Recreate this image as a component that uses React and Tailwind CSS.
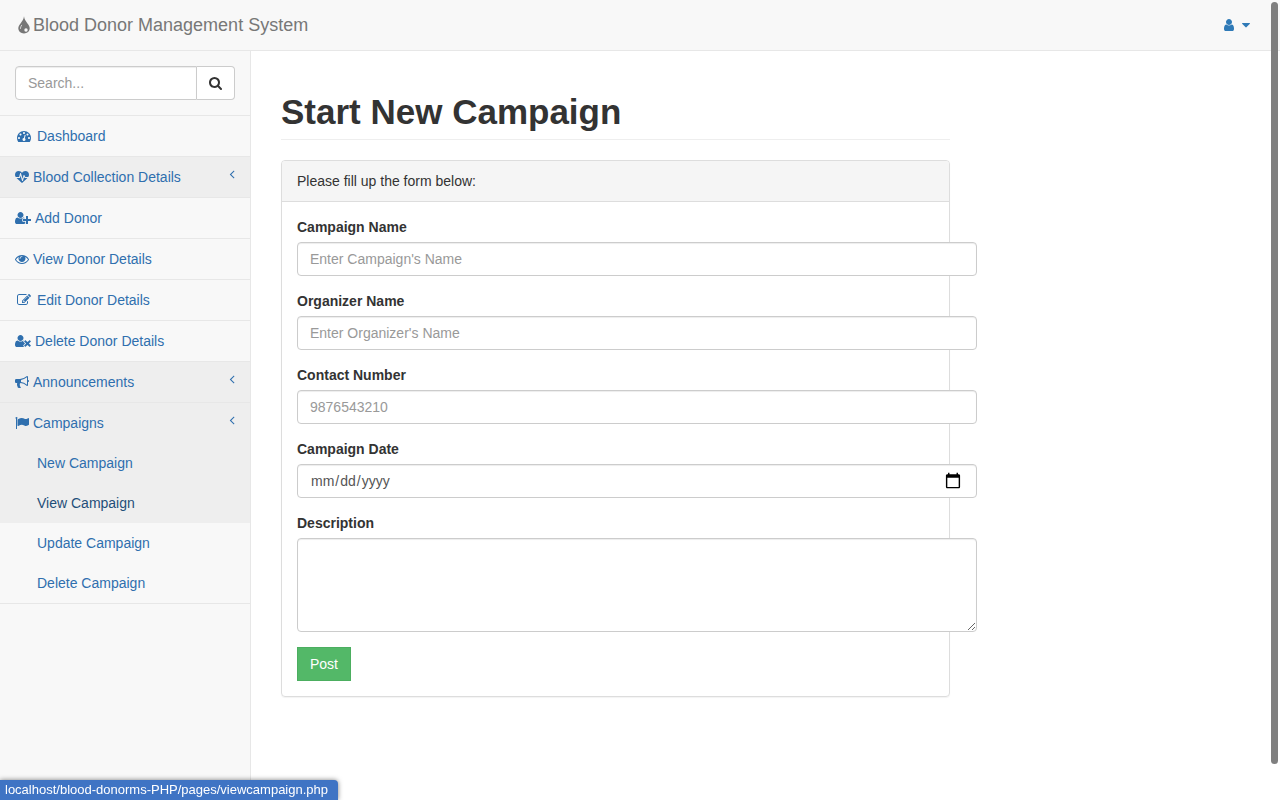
const HEAD_PATH =
  'M704 640q-159 0-271.5 112.5t-112.5 271.5 112.5 271.5 271.5 112.5 271.5-112.5 112.5-271.5-112.5-271.5-271.5-112.5z'

const icons = {
  user: {
    w: 1280,
    x: 256,
    d: 'M1536 1399q0 109-62.5 187t-150.5 78h-854q-88 0-150.5-78t-62.5-187q0-85 8.5-160.5t31.5-152 58.5-131 94-89 134.5-34.5q131 128 313 128t313-128q76 0 134.5 34.5t94 89 58.5 131 31.5 152 8.5 160.5zm-256-887q0 159-112.5 271.5t-271.5 112.5-271.5-112.5-112.5-271.5 112.5-271.5 271.5-112.5 271.5 112.5 112.5 271.5z',
  },
  caret: {
    w: 1024,
    x: 384,
    d: 'M1408 704q0 26-19 45l-448 448q-19 19-45 19t-45-19l-448-448q-19-19-19-45t19-45 45-19h896q26 0 45 19t19 45z',
  },
  search: {
    w: 1664,
    x: 64,
    d: 'M1216 832q0-185-131.5-316.5t-316.5-131.5-316.5 131.5-131.5 316.5 131.5 316.5 316.5 131.5 316.5-131.5 131.5-316.5zm512 832q0 52-38 90t-90 38q-54 0-90-38l-343-342q-179 124-399 124-143 0-273.5-55.5t-225-150-150-225-55.5-273.5 55.5-273.5 150-225 225-150 273.5-55.5 273.5 55.5 225 150 150 225 55.5 273.5q0 220-124 399l343 343q37 37 37 90z',
  },
  dashboard: {
    w: 1792,
    d: 'M384 1152q0-53-37.5-90.5t-90.5-37.5-90.5 37.5-37.5 90.5 37.5 90.5 90.5 37.5 90.5-37.5 37.5-90.5zm192-448q0-53-37.5-90.5t-90.5-37.5-90.5 37.5-37.5 90.5 37.5 90.5 90.5 37.5 90.5-37.5 37.5-90.5zm428 481l101-382q6-26-7.5-48.5t-38.5-29.5-48 6.5-30 39.5l-101 382q-60 5-107 43.5t-63 98.5q-20 77 20 146t117 89 146-20 89-117q16-60-6-117t-72-91zm660-33q0-53-37.5-90.5t-90.5-37.5-90.5 37.5-37.5 90.5 37.5 90.5 90.5 37.5 90.5-37.5 37.5-90.5zm-640-640q0-53-37.5-90.5t-90.5-37.5-90.5 37.5-37.5 90.5 37.5 90.5 90.5 37.5 90.5-37.5 37.5-90.5zm448 192q0-53-37.5-90.5t-90.5-37.5-90.5 37.5-37.5 90.5 37.5 90.5 90.5 37.5 90.5-37.5 37.5-90.5zm320 448q0 261-141 483-19 29-54 29h-1402q-35 0-54-29-141-221-141-483 0-182 71-348t191-286 286-191 348-71 348 71 286 191 191 286 71 348z',
  },
  heartbeat: {
    w: 1792,
    d: 'M1280 1024h305q-5 6-10 10.5t-9 7.5l-3 4-623 600q-18 18-44 18t-44-18l-624-602q-5-2-21-20h369q22 0 39.5-13.5t22.5-34.5l70-281 190 667q6 20 23 33t39 13q21 0 38-13t23-33l146-485 56 112q18 35 57 35zm512-428q0 145-103 300h-369l-111-221q-8-17-25.5-27t-36.5-8q-45 5-56 46l-129 430-196-686q-6-20-23.5-33t-39.5-13-39 13.5-22 34.5l-116 464h-423q-103-155-103-300 0-220 127-344t351-124q62 0 126.5 21.5t120 58 95.5 68.5 76 68q36-36 76-68t95.5-68.5 120-58 126.5-21.5q224 0 351 124t127 344z',
  },
  userPlus: {
    w: 2048,
    flip: true,
    d: HEAD_PATH + 'M1664 512h352q13 0 22.5-9.5t9.5-22.5v-192q0-13-9.5-22.5t-22.5-9.5h-352v-352q0-13-9.5-22.5t-22.5-9.5h-192q-13 0-22.5 9.5t-9.5 22.5v352h-352q-13 0-22.5 9.5t-9.5 22.5v192q0 13 9.5 22.5t22.5 9.5h352v352q0 13 9.5 22.5t22.5 9.5h192q13 0 22.5-9.5t9.5-22.5v-352zM928 288q0-52 38-90t90-38h256v-238q-68-50-171-50h-874q-121 0-194 69t-73 190q0 53 3.5 103.5t14 109t26.5 108.5t43 97.5t62 81t85.5 53.5t111.5 20q19 0 39-17q79-61 154.5-91.5t164.5-30.5t164.5 30.5t154.5 91.5q20 17 39 17q132 0 217-96h-223q-52 0-90-38t-38-90v-192z',
  },
  userTimes: {
    w: 2048,
    flip: true,
    d: HEAD_PATH + 'M1781 320l249-249q9-9 9-23q0-13-9-22l-136-136q-9-9-22-9q-14 0-23 9l-249 249l-249-249q-9-9-23-9q-13 0-22 9l-136 136q-9 9-9 22q0 14 9 23l249 249l-249 249q-9 9-9 23q0 13 9 22l136 136q9 9 22 9q14 0 23-9l249-249l249 249q9 9 23 9q13 0 22-9l136-136q9-9 9-22q0-14-9-23zM1283 320l-181-181q-37-37-37-91q0-53 37-90l83-83q-21-3-44-3h-874q-121 0-194 69t-73 190q0 53 3.5 103.5t14 109t26.5 108.5t43 97.5t62 81t85.5 53.5t111.5 20q19 0 39-17q154-122 319-122t319 122q20 17 39 17q28 0 57-6q-28-27-41-50t-13-56q0-54 37-91z',
  },
  eye: {
    w: 1792,
    d: 'M1664 960q-152-236-381-353 61 104 61 225 0 185-131.5 316.5t-316.5 131.5-316.5-131.5-131.5-316.5q0-121 61-225-229 117-381 353 133 205 333.5 326.5t434.5 121.5 434.5-121.5 333.5-326.5zm-720-384q0-20-14-34t-34-14q-125 0-214.5 89.5t-89.5 214.5q0 20 14 34t34 14 34-14 14-34q0-86 61-147t147-61q20 0 34-14t14-34zm848 384q0 34-20 69-140 230-376.5 368.5t-499.5 138.5-499.5-139-376.5-368q-20-35-20-69t20-69q140-229 376.5-368t499.5-139 499.5 139 376.5 368q20 35 20 69z',
  },
  edit: {
    w: 1792,
    d: 'M888 1184l116-116-152-152-116 116v56h96v96h56zm440-720q-16-16-33 1l-350 350q-17 17-1 33t33-1l350-350q17-17 1-33zm80 594v190q0 119-84.5 203.5t-203.5 84.5h-832q-119 0-203.5-84.5t-84.5-203.5v-832q0-119 84.5-203.5t203.5-84.5h832q63 0 117 25 15 7 18 23 3 17-9 29l-49 49q-14 14-32 8-23-6-45-6h-832q-66 0-113 47t-47 113v832q0 66 47 113t113 47h832q66 0 113-47t47-113v-126q0-13 9-22l64-64q15-15 35-7t20 29zm-96-738l288 288-672 672h-288v-288zm444 132l-92 92-288-288 92-92q28-28 68-28t68 28l152 152q28 28 28 68t-28 68z',
  },
  bullhorn: {
    w: 1792,
    d: 'M1664 640q53 0 90.5 37.5t37.5 90.5-37.5 90.5-90.5 37.5v384q0 52-38 90t-90 38q-417-347-812-380-58 19-91 66t-31 100.5 40 92.5q-20 33-23 65.5t6 58 33.5 55 48 50 61.5 50.5q-29 58-111.5 83t-168.5 11.5-132-55.5q-7-23-29.5-87.5t-32-94.5-23-89-15-101 3.5-98.5 22-110.5h-122q-66 0-113-47t-47-113v-192q0-66 47-113t113-47h480q435 0 896-384 52 0 90 38t38 90v384zm-128 604v-954q-394 302-768 343v270q377 42 768 341z',
  },
  flag: {
    w: 1792,
    flip: true,
    d: 'M320 1280q0-72-64-110v-1266q0-13-9.5-22.5t-22.5-9.5h-64q-13 0-22.5 9.5t-9.5 22.5v1266q-64 38-64 110q0 53 37.5 90.5t90.5 37.5t90.5-37.5t37.5-90.5zM1792 1216v-763q0-25-12.5-38.5t-39.5-27.5q-215-116-369-116q-61 0-123.5 22t-108.5 48t-115.5 48t-142.5 22q-192 0-464-146q-17-9-33-9q-26 0-45 19t-19 45v742q0 32 31 55q21 14 79 43q236 120 421 120q107 0 200-29t219-88q38-19 88-19q54 0 117.5 21t110 47t88 47t54.5 21q26 0 45-19t19-45z',
  },
  angleLeft: {
    w: 768,
    x: 512,
    d: 'M1203 544q0 13-10 23l-393 393 393 393q10 10 10 23t-10 23l-50 50q-10 10-23 10t-23-10l-466-466q-10-10-10-23t10-23l466-466q10-10 23-10t23 10l50 50q10 10 10 23z',
  },
}

function Icon({ name, className = '' }) {
  const { w, x = 0, d, flip } = icons[name]
  return (
    <svg
      viewBox={`${x} 0 ${w} 1792`}
      className={`h-[14px] shrink-0 ${className}`}
      fill="currentColor"
      aria-hidden="true"
    >
      <path d={d} transform={flip ? 'translate(0 1536) scale(1 -1)' : undefined} />
    </svg>
  )
}

function DropLogo() {
  return (
    <svg viewBox="0 0 12 18" className="h-[18px] w-3 shrink-0" aria-hidden="true">
      <path
        d="M6 .3C6.3 3 7.7 5 9.3 7.2 10.7 9.1 11.7 10.5 11.7 12.2 11.7 15.3 9.2 17.4 6 17.4S.3 15.3.3 12.2C.3 10.5 1.3 9.1 2.7 7.2 4.3 5 5.7 3 6 .3z"
        fill="#777"
      />
      <circle cx="8" cy="14" r="1.7" fill="#f8f8f8" />
      <path d="M3.6 9.2Q2.4 10.9 2.4 12.5" fill="none" stroke="#d4d4d4" strokeWidth="1" strokeLinecap="round" />
    </svg>
  )
}

const menu = [
  { label: 'Dashboard', icon: 'dashboard', fixed: true },
  { label: 'Blood Collection Details', icon: 'heartbeat', arrow: true },
  { label: 'Add Donor', icon: 'userPlus' },
  { label: 'View Donor Details', icon: 'eye' },
  { label: 'Edit Donor Details', icon: 'edit', fixed: true },
  { label: 'Delete Donor Details', icon: 'userTimes' },
  { label: 'Announcements', icon: 'bullhorn', arrow: true },
  {
    label: 'Campaigns',
    icon: 'flag',
    arrow: true,
    children: ['New Campaign', 'View Campaign', 'Update Campaign', 'Delete Campaign'],
  },
]

function MenuItem({ item }) {
  return (
    <li className="border-b border-[#e7e7e7]">
      <a
        href="#"
        className={`flex h-10 items-center gap-1 px-[15px] hover:bg-[#eee] ${item.arrow ? 'bg-[#eee]' : ''}`}
      >
        {item.fixed ? (
          <span className="flex w-[18px] justify-center">
            <Icon name={item.icon} />
          </span>
        ) : (
          <Icon name={item.icon} />
        )}
        {item.label}
        {item.arrow && <Icon name="angleLeft" className="mb-[6px] ml-auto" />}
      </a>
      {item.children && (
        <ul>
          {item.children.map((child, i) => (
            <li key={child}>
              <a
                href="#"
                className={`flex h-10 items-center pl-[37px] ${i < 2 ? 'bg-[#eee]' : ''} ${
                  child === 'View Campaign' ? 'text-[#1f4e79]' : ''
                }`}
              >
                {child}
              </a>
            </li>
          ))}
        </ul>
      )}
    </li>
  )
}

const control =
  'block w-[680px] rounded-[4px] border border-[#ccc] bg-white px-3 text-[#555] shadow-[inset_0_1px_1px_rgba(0,0,0,0.075)] placeholder:text-[#999]'

function Field({ id, label, children }) {
  return (
    <div className="mb-[15px]">
      <label htmlFor={id} className="mb-[5px] block font-bold">
        {label}
      </label>
      {children}
    </div>
  )
}

export default function App() {
  return (
    <div className="flex min-h-screen flex-col bg-[#f8f8f8] font-['Liberation_Sans',Arial,sans-serif] text-[14px] leading-[20px] text-[#333]">
      <header className="flex h-[51px] items-center justify-between border-b border-[#e7e7e7] pr-[30px] pl-[18px]">
        <a href="#" className="flex items-center gap-[3px] text-[18px] text-[#777]">
          <DropLogo />
          Blood Donor Management System
        </a>
        <button type="button" aria-label="Account" className="flex items-center gap-2 text-[#2f7ab7]">
          <Icon name="user" />
          <Icon name="caret" />
        </button>
      </header>

      <div className="flex flex-1">
        <aside className="w-[250px] shrink-0 text-[#2f6fae]">
          <form className="flex border-b border-[#e7e7e7] p-[15px]">
            <input
              type="search"
              aria-label="Search"
              placeholder="Search..."
              className="h-[34px] min-w-0 flex-1 rounded-l-[4px] border border-[#ccc] bg-white px-3 text-[#555] shadow-[inset_0_1px_1px_rgba(0,0,0,0.075)] placeholder:text-[#999]"
            />
            <button
              type="button"
              aria-label="Submit search"
              className="flex h-[34px] w-[38px] items-center justify-center rounded-r-[4px] border border-l-0 border-[#ccc] bg-white text-[#333]"
            >
              <Icon name="search" />
            </button>
          </form>
          <ul>
            {menu.map((item) => (
              <MenuItem key={item.label} item={item} />
            ))}
          </ul>
        </aside>

        <main className="flex-1 border-l border-[#e7e7e7] bg-white px-[30px] pt-[41px]">
          <div className="w-[669px]">
            <h1 className="mb-5 border-b border-[#eee] pb-[7px] text-[35px] leading-[40px] font-bold">
              Start New Campaign
            </h1>
            <section className="rounded-[4px] border border-[#ddd] shadow-[0_1px_1px_rgba(0,0,0,0.05)]">
              <div className="rounded-t-[3px] border-b border-[#ddd] bg-[#f5f5f5] px-[15px] py-[10px]">
                Please fill up the form below:
              </div>
              <form className="p-[15px]">
                <Field id="name" label="Campaign Name">
                  <input id="name" type="text" placeholder="Enter Campaign's Name" className={`h-[34px] ${control}`} />
                </Field>
                <Field id="organizer" label="Organizer Name">
                  <input
                    id="organizer"
                    type="text"
                    placeholder="Enter Organizer's Name"
                    className={`h-[34px] ${control}`}
                  />
                </Field>
                <Field id="contact" label="Contact Number">
                  <input id="contact" type="text" placeholder="9876543210" className={`h-[34px] ${control}`} />
                </Field>
                <Field id="date" label="Campaign Date">
                  <input
                    id="date"
                    type="date"
                    className={`h-[34px] [&::-webkit-calendar-picker-indicator]:size-[18px] ${control}`}
                  />
                </Field>
                <Field id="description" label="Description">
                  <textarea id="description" className={`h-[94px] py-[6px] ${control}`} />
                </Field>
                <button
                  type="button"
                  className="block h-[34px] border border-[#4cae60] bg-[#53b868] px-3 text-white"
                >
                  Post
                </button>
              </form>
            </section>
          </div>
        </main>
      </div>

      {/* Link address shown while hovering View Campaign */}
      <div className="fixed bottom-0 left-0 rounded-tr-[4px] bg-[#3f74c4] pr-[10px] pl-[5px] text-[13px] text-white shadow-[0_0_5px_rgba(0,0,0,0.5)]">
        localhost/blood-donorms-PHP/pages/viewcampaign.php
      </div>

      {/* Overlay scrollbar */}
      <div className="fixed top-[2px] right-[2px] h-[762px] w-[7px] rounded-full bg-[#7f7f7f]" />
    </div>
  )
}
